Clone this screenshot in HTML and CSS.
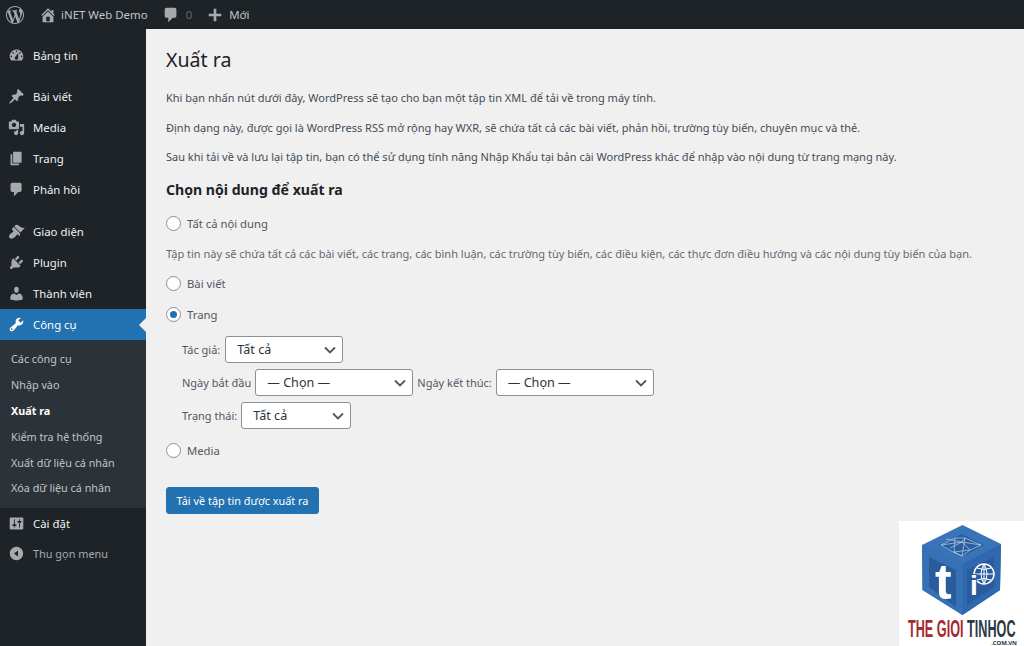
FILE: index.html
```html
<!DOCTYPE html>
<html lang="vi">
<head>
<meta charset="utf-8">
<title>Xuất ra</title>
<link rel="stylesheet" href="styles.css">
</head>
<body>
<header class="adminbar">
  <svg class="bar-logo" viewBox="0 0 20 20"><path d="M20 10c0-5.510-4.490-10-10-10C4.480 0 0 4.490 0 10c0 5.520 4.480 10 10 10 5.510 0 10-4.480 10-10zM7.780 15.370L4.370 6.220c.550-.020 1.170-.080 1.170-.080.500-.060.440-1.130-.060-1.110 0 0-1.450.110-2.370.110-.180 0-.370 0-.580-.010C4.120 2.690 6.890 1.110 10 1.110c2.330 0 4.450.870 6.050 2.340-.680-.110-1.650.390-1.650 1.580 0 .740.450 1.360.900 2.100.350.610.550 1.360.550 2.460 0 1.490-1.400 5-1.400 5l-3.030-8.350c.540-.020.820-.170.820-.170.500-.050.440-1.250-.060-1.220 0 0-1.440.120-2.380.120-.870 0-2.330-.120-2.330-.120-.500-.030-.560 1.200-.060 1.220l.920.080 1.260 3.410zM17.410 10c.240-.640.740-1.870.430-4.250.700 1.290 1.050 2.710 1.050 4.250 0 3.290-1.730 6.240-4.400 7.780.970-2.590 1.940-5.200 2.920-7.780zM6.100 18.090C3.120 16.650 1.110 13.530 1.110 10c0-1.300.230-2.480.720-3.580C3.250 10.300 4.670 14.200 6.100 18.090zm4.030-6.630l2.580 6.980c-.860.290-1.760.450-2.710.450-.790 0-1.570-.110-2.290-.330.810-2.380 1.620-4.740 2.420-7.100z"/></svg>
  <div class="bar-item bar-site">
    <svg class="bar-icon" viewBox="0 0 20 20"><path fill-rule="evenodd" d="M16 8.500l1.530 1.530-1.060 1.060L10 4.620l-6.470 6.470-1.060-1.060L10 2.500l4 4v-2h2v4zm-6-2.460l6 5.990V18H4v-5.970zM12 17v-5H8v5h4z"/></svg>
    <span>iNET Web Demo</span>
  </div>
  <div class="bar-item bar-comments">
    <svg class="bar-icon" viewBox="0 0 20 20"><path d="M5 2h9c1.100 0 2 .9 2 2v7c0 1.100-.9 2-2 2h-2l-5 5v-5H5c-1.100 0-2-.9-2-2V4c0-1.100.9-2 2-2z"/></svg>
    <span class="bar-count">0</span>
  </div>
  <div class="bar-item bar-new">
    <svg class="bar-icon" viewBox="0 0 20 20"><path d="M17 8.500v3h-5.500V17h-3v-5.500H3v-3h5.500V3h3v5.500z"/></svg>
    <span>Mới</span>
  </div>
</header>
<div class="shell">
  <nav class="sidebar">
    <ul class="menu">
      <li class="item"><svg class="icon" viewBox="0 0 20 20"><path fill-rule="evenodd" d="M3.760 16h12.480c1.100-1.370 1.760-3.110 1.760-5 0-4.420-3.580-8-8-8s-8 3.580-8 8c0 1.890.66 3.630 1.760 5zM10 4c.55 0 1 .45 1 1s-.45 1-1 1-1-.45-1-1 .45-1 1-1zM6 6c.55 0 1 .45 1 1s-.45 1-1 1-1-.45-1-1 .45-1 1-1zm8 0c.55 0 1 .45 1 1s-.45 1-1 1-1-.45-1-1 .45-1 1-1zm-5.370 5.550L12 7v6c0 1.100-.9 2-2 2s-2-.9-2-2c0-.57.24-1.080.63-1.450zM4 10c.55 0 1 .45 1 1s-.45 1-1 1-1-.45-1-1 .45-1 1-1zm12 0c.55 0 1 .45 1 1s-.45 1-1 1-1-.45-1-1 .45-1 1-1z"/></svg><span>Bảng tin</span></li>
      <li class="item gap"><svg class="icon" viewBox="0 0 20 20"><path d="M10.440 3.020l1.820-1.820 6.360 6.350-1.830 1.820c-1.050-.68-2.480-.57-3.410.36l-.75.75c-.92.93-1.040 2.350-.35 3.410l-1.830 1.820-2.410-2.410-2.800 2.790c-.42.42-3.380 2.710-3.800 2.290s1.860-3.390 2.280-3.810l2.790-2.790L4.100 9.360l1.830-1.820c1.050.69 2.480.57 3.400-.36l.75-.75c.93-.92 1.050-2.350.36-3.410z"/></svg><span>Bài viết</span></li>
      <li class="item"><svg class="icon" viewBox="0 0 20 20"><path fill-rule="evenodd" d="M13 11V4c0-.55-.45-1-1-1h-1.670L9 1H5L3.670 3H2c-.55 0-1 .45-1 1v7c0 .55.45 1 1 1h10c.55 0 1-.45 1-1zM7 4.500c1.380 0 2.500 1.120 2.500 2.500S8.380 9.500 7 9.500 4.500 8.380 4.500 7 5.620 4.500 7 4.500zM14 6h5v10.500c0 1.380-1.120 2.500-2.500 2.500S14 17.880 14 16.500s1.120-2.500 2.500-2.500c.17 0 .34.02.5.05V9h-3V6zm-4 8.050V13h2v3.500c0 1.380-1.120 2.500-2.500 2.500S7 17.880 7 16.500 8.120 14 9.500 14c.17 0 .34.02.5.05z"/></svg><span>Media</span></li>
      <li class="item"><svg class="icon" viewBox="0 0 20 20"><path d="M6 15V2h10v13H6zm-1 1h8v2H3V5h2v11z"/></svg><span>Trang</span></li>
      <li class="item"><svg class="icon" viewBox="0 0 20 20"><path d="M5 2h9c1.100 0 2 .9 2 2v7c0 1.100-.9 2-2 2h-2l-5 5v-5H5c-1.100 0-2-.9-2-2V4c0-1.100.9-2 2-2z"/></svg><span>Phản hồi</span></li>
      <li class="item gap wide"><svg class="icon" viewBox="0 0 20 20"><path d="M14.480 11.060L7.410 3.990l1.500-1.500c.5-.56 2.300-.47 3.510.32 1.210.8 1.430 1.280 2.910 2.100 1.180.64 2.450 1.260 4.450.85zm-.71.71L6.700 4.700 4.930 6.470c-.39.39-.39 1.020 0 1.410l1.060 1.060c.39.39.39 1.030 0 1.420-.6.6-1.430 1.110-2.210 1.690-.35.26-.7.53-1.010.84C1.430 13.730.5 16.180 2 17.680c1.500 1.500 3.950.57 5.790-.77.31-.31.58-.66.84-1.010.58-.78 1.090-1.610 1.690-2.210.39-.39 1.030-.39 1.420 0l1.060 1.060c.39.39 1.020.39 1.410 0z"/></svg><span>Giao diện</span></li>
      <li class="item"><svg class="icon" viewBox="0 0 20 20"><path d="M13.110 4.360L9.870 7.600 8 5.730l3.240-3.240c.35-.34 1.050-.2 1.560.32.52.51.66 1.210.31 1.550zm-8 1.770l.91-1.120 9.010 9.010-1.190.84c-.71.71-2.630 1.160-3.820 1.160H6.140L4.900 17.260c-.59.59-1.540.59-2.120 0-.59-.58-.59-1.530 0-2.120l1.240-1.240v-3.880c0-1.130.4-3.190 1.090-3.890zm7.260 3.970l3.240-3.240c.34-.35 1.040-.21 1.550.31.52.51.66 1.210.31 1.550l-3.240 3.250z"/></svg><span>Plugin</span></li>
      <li class="item"><svg class="icon" viewBox="0 0 20 20"><path d="M10 9.250c-2.270 0-2.730-3.440-2.730-3.440C7 4.020 7.820 2 9.970 2c2.160 0 2.980 2.020 2.710 3.810 0 0-.41 3.440-2.680 3.440zm0 2.570L12.720 10c2.390 0 4.520 2.330 4.520 4.530v2.490s-3.650 1.130-7.240 1.130c-3.650 0-7.240-1.130-7.240-1.130v-2.490c0-2.250 1.940-4.480 4.470-4.480z"/></svg><span>Thành viên</span></li>
      <li class="item active"><svg class="icon" viewBox="0 0 20 20"><path fill-rule="evenodd" d="M16.680 9.770c-1.340 1.340-3.300 1.670-4.950.99l-5.410 6.520c-.99.99-2.590.99-3.580 0s-.99-2.590 0-3.570l6.520-5.420c-.68-1.650-.35-3.610.99-4.950 1.280-1.280 3.120-1.620 4.720-1.060l-2.890 2.890 2.820 2.820 2.860-2.870c.53 1.580.18 3.390-1.080 4.650zM3.810 16.210c.4.39 1.040.39 1.430 0 .4-.4.4-1.040 0-1.430-.39-.4-1.030-.4-1.430 0-.39.39-.39 1.030 0 1.430z"/></svg><span>Công cụ</span></li>
      <li class="sub">
        <ul class="sub-list">
          <li>Các công cụ</li>
          <li>Nhập vào</li>
          <li class="current">Xuất ra</li>
          <li>Kiểm tra hệ thống</li>
          <li>Xuất dữ liệu cá nhân</li>
          <li>Xóa dữ liệu cá nhân</li>
        </ul>
      </li>
      <li class="item"><svg class="icon" viewBox="0 0 20 20"><path fill-rule="evenodd" d="M18 16V4c0-.55-.45-1-1-1H3c-.55 0-1 .45-1 1v12c0 .55.45 1 1 1h14c.55 0 1-.45 1-1zM8 11h1c.55 0 1 .45 1 1s-.45 1-1 1H8v1.500c0 .28-.22.5-.5.5s-.5-.22-.5-.5V13H6c-.55 0-1-.45-1-1s.45-1 1-1h1V5.500c0-.28.22-.5.5-.5s.5.22.5.5V11zm5-2h-1c-.55 0-1-.45-1-1s.45-1 1-1h1V5.500c0-.28.22-.5.5-.5s.5.22.5.5V7h1c.55 0 1 .45 1 1s-.45 1-1 1h-1v5.500c0 .28-.22.5-.5.5s-.5-.22-.5-.5V9z"/></svg><span>Cài đặt</span></li>
      <li class="item collapse"><svg class="icon" viewBox="0 0 20 20"><path fill-rule="evenodd" d="M10 2.160c4.330 0 7.840 3.510 7.840 7.840s-3.510 7.840-7.840 7.840S2.160 14.330 2.160 10 5.670 2.160 10 2.160zM11.800 13.500v-7L7 10z"/></svg><span>Thu gọn menu</span></li>
    </ul>
  </nav>
  <main class="content">
    <h1>Xuất ra</h1>
    <p>Khi bạn nhấn nút dưới đây, WordPress sẽ tạo cho bạn một tập tin XML để tải về trong máy tính.</p>
    <p>Định dạng này, được gọi là WordPress RSS mở rộng hay WXR, sẽ chứa tất cả các bài viết, phản hồi, trường tùy biến, chuyên mục và thẻ.</p>
    <p>Sau khi tải về và lưu lại tập tin, bạn có thể sử dụng tính năng Nhập Khẩu tại bản cài WordPress khác để nhập vào nội dung từ trang mạng này.</p>
    <h2>Chọn nội dung để xuất ra</h2>
    <form class="export">
      <label class="radio first"><input type="radio" name="content"><span>Tất cả nội dung</span></label>
      <p class="hint">Tập tin này sẽ chứa tất cả các bài viết, các trang, các bình luận, các trường tùy biến, các điều kiện, các thực đơn điều hướng và các nội dung tùy biến của bạn.</p>
      <label class="radio"><input type="radio" name="content"><span>Bài viết</span></label>
      <label class="radio"><input type="radio" name="content" checked><span>Trang</span></label>
      <div class="filters">
        <div class="filter">
          <span>Tác giả:</span>
          <select class="sel-author"><option>Tất cả</option></select>
        </div>
        <div class="filter">
          <span>Ngày bắt đầu</span>
          <select class="sel-date"><option>— Chọn —</option></select>
          <span>Ngày kết thúc:</span>
          <select class="sel-date"><option>— Chọn —</option></select>
        </div>
        <div class="filter">
          <span>Trạng thái:</span>
          <select class="sel-status"><option>Tất cả</option></select>
        </div>
      </div>
      <label class="radio"><input type="radio" name="content"><span>Media</span></label>
      <button type="button" class="primary">Tải về tập tin được xuất ra</button>
    </form>
  </main>
</div>
<aside class="brand">
  <svg class="cube" viewBox="0 0 80 92">
    <polygon points="40.500,2 79,21 78,67 40.500,92 0.500,67 0,22" fill="#3a74b8"/>
    <polygon points="17,22 40,11 62,22 40,34" fill="#2a5f9f"/>
    <polygon points="0,22 40.500,41 40.500,92 0.500,67" fill="#3670b5"/>
    <polygon points="7,34 34,47 34,84 7,64" fill="#2a5c9c"/>
    <polygon points="79,21 40.500,41 40.500,92 78,67" fill="#2f68ae"/>
    <polygon points="45,47 72,34 72,64 45,82" fill="#2a5c9c"/>
    <path d="M19 22l14-7 10 0 16 7-11 5-8 6-9-4zM33 15l-1 14 8 4 3-18M19 22l21-3 8 8M24 16l16 3 19 3M28 25l12-6 3-4M32 29l16-2" fill="none" stroke="#cfe0f2" stroke-width=".6"/>
    <text class="cube-t" x="13" y="76">t</text>
    <circle cx="62" cy="51" r="10" fill="none" stroke="#fff" stroke-width="1.500"/>
    <path d="M62 41v20M52 51h20M55 45q7 3 14 0M55 57q7-3 14 0M62 41q-6 10 0 20M62 41q6 10 0 20" fill="none" stroke="#fff" stroke-width="1"/>
    <text class="cube-i" x="48" y="72">i</text>
  </svg>
  <div class="brand-name"><span class="brand-red">THE GIOI</span> <span class="brand-dark">TINHOC</span></div>
  <div class="brand-domain">.COM.VN</div>
</aside>
</body>
</html>
```

FILE: styles.css
```css
* { box-sizing: border-box; }
html, body { margin: 0; padding: 0; height: 646px; overflow: hidden; }
body {
  font-family: "Noto Sans", sans-serif;
  font-size: 11px;
  color: #454c53;
  background: #f0f0f1;
  position: relative;
}
ul { list-style: none; margin: 0; padding: 0; }

.adminbar {
  height: 29px;
  background: #1d2327;
  color: #c3c4c7;
  display: flex;
  align-items: center;
  font-size: 11.450px;
  padding-left: 6px;
}
.bar-logo { width: 18px; height: 18px; fill: #a7aaad; margin-right: 15px; }
.bar-item { display: flex; align-items: center; }
.bar-icon { width: 18px; height: 18px; fill: #a7aaad; margin-right: 4px; }
.bar-site { margin-right: 14px; }
.bar-count { color: #646970; margin-left: 2px; }
.bar-comments { margin-right: 14px; }
.bar-new .bar-icon { margin-right: 5px; }

.shell { display: flex; height: 617px; }

.sidebar {
  width: 146px;
  flex: none;
  background: #1d2327;
  color: #f0f0f1;
  padding-top: 11px;
}
.item {
  height: 31px;
  display: flex;
  align-items: center;
  padding-left: 8px;
  gap: 8px;
  position: relative;
  font-size: 11.400px;
}
.item.gap { margin-top: 10px; }
.item.gap.wide { margin-top: 11px; }
.icon { width: 17px; height: 17px; fill: #a7aaad; flex: none; }
.item.active { background: #2271b1; color: #fff; }
.item.active .icon { fill: #fff; }
.item.active::after {
  content: "";
  position: absolute;
  right: 0;
  top: 50%;
  margin-top: -7px;
  border: 7px solid transparent;
  border-right-color: #f0f0f1;
  border-left-width: 0;
}
.item.collapse { color: #a7aaad; font-size: 10.900px; margin-top: -1px; }
.sub { background: #2c3338; padding: 6px 0 7px; }
.sub-list li {
  height: 25.800px;
  display: flex;
  align-items: center;
  padding-left: 11px;
  font-size: 10.800px;
  color: #c3c4c7;
}
.sub-list li.current { color: #fff; font-weight: 700; }

.content { flex: 1; padding: 0 20px; min-width: 0; }
h1 {
  font-size: 19.600px;
  font-weight: 400;
  line-height: 28px;
  color: #1d2327;
  margin: 17px 0 0;
}
.content p { margin: 0; line-height: 18px; }
.content h1 + p { margin-top: 15px; }
.content > p + p { margin-top: 11.500px; }
h2 {
  font-size: 14.100px;
  font-weight: 700;
  line-height: 20px;
  color: #1d2327;
  margin: 14px 0 0;
}
.export { display: flex; flex-direction: column; align-items: flex-start; }
.radio {
  display: flex;
  align-items: center;
  height: 31px;
  gap: 6px;
  font-size: 11.300px;
  color: #50575e;
}
.radio.first { margin-top: 8px; }
.radio input {
  appearance: none;
  width: 15px;
  height: 15px;
  margin: 0;
  border-radius: 50%;
  border: 1px solid #8c8f94;
  background: #fff;
  display: grid;
  place-items: center;
}
.radio input:checked::before {
  content: "";
  width: 7px;
  height: 7px;
  border-radius: 50%;
  background: #2271b1;
}
.export .hint { color: #646970; margin: 6px 0 5px; }
.filters { display: flex; flex-direction: column; gap: 6px; padding: 6px 0 6px 16px; }
.filter { display: flex; align-items: center; gap: 4px; color: #50575e; font-size: 11px; }
select {
  appearance: none;
  height: 27px;
  font: inherit;
  font-size: 12.600px;
  color: #2c3338;
  background: #fff;
  border: 1px solid #8c8f94;
  border-radius: 3px;
  padding: 0 22px 0 11px;
  background-image: url("data:image/svg+xml,%3Csvg xmlns='http://www.w3.org/2000/svg' width='12' height='8' viewBox='0 0 12 8'%3E%3Cpath d='M1 1.500l5 5 5-5' fill='none' stroke='%2350575e' stroke-width='1.800'/%3E%3C/svg%3E");
  background-repeat: no-repeat;
  background-position: right 6px center;
}
.sel-author { width: 118px; margin-left: 1px; }
.sel-date { width: 158px; }
.sel-status { width: 110px; }
.primary {
  margin-top: 21px;
  height: 27px;
  width: 153px;
  padding: 0;
  font: inherit;
  font-size: 10.900px;
  color: #fff;
  background: #2271b1;
  border: 1px solid #2271b1;
  border-radius: 3px;
}

.brand {
  position: absolute;
  right: 0;
  bottom: 0;
  width: 125px;
  height: 125px;
  background: #fff;
  display: flex;
  flex-direction: column;
  align-items: center;
  padding-top: 2px;
}
.cube { width: 80px; height: 92px; flex: none; }
.cube-t { font: 700 50px "Liberation Sans", sans-serif; fill: #fff; }
.cube-i { font: 700 28px "Liberation Sans", sans-serif; fill: #fff; stroke: #2a5c9c; stroke-width: 2px; paint-order: stroke; }
.brand-name {
  font-family: "Liberation Sans", sans-serif;
  font-weight: 700;
  font-size: 23px;
  line-height: 18px;
  margin-top: 5px;
  white-space: nowrap;
  flex: none;
  transform: scaleX(.55);
}
.brand-red { color: #a52a2f; }
.brand-dark { color: #2c3a46; }
.brand-domain {
  align-self: flex-end;
  font-size: 6px;
  line-height: 6px;
  font-weight: 700;
  color: #2c3a46;
  margin: 2px 7px 0 0;
}
```
